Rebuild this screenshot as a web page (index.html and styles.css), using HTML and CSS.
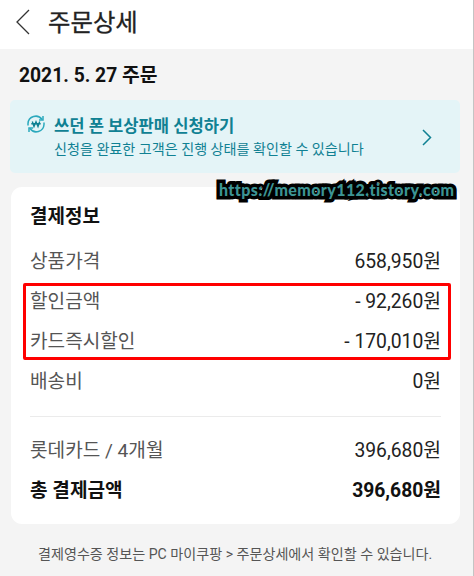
FILE: index.html
```html
<!DOCTYPE html>
<html lang="ko">
  <head>
    <meta charset="UTF-8" />
    <meta name="viewport" content="width=device-width, initial-scale=1.0" />
    <title>주문상세</title>
    <link rel="stylesheet" href="styles.css">
  </head>
  <body>
    <header class="header">
      <svg class="back" width="14" height="26" viewBox="0 0 14 26">
        <path d="M13 1 L1 13 L13 25" />
      </svg>
      <h1>주문상세</h1>
    </header>

    <main class="content">
      <h2 class="order-date">2021. 5. 27 주문</h2>

      <a class="promo">
        <svg class="promo-icon" width="18" height="18" viewBox="0 0 18 18">
          <path d="M1 10.5 V8.5 A7.7 7.7 0 0 1 15 4.5" />
          <path d="M17 7.5 V9.5 A7.7 7.7 0 0 1 3 13.5" />
          <path d="M16 1 V5 H12" />
          <path d="M2 17 V13 H6" />
          <path class="won" d="M5.3 6.5 L7 11.5 L9 6.8 L11 11.5 L12.7 6.5 M4.3 8.8 H13.7" />
        </svg>
        <div class="promo-text">
          <strong>쓰던 폰 보상판매 신청하기</strong>
          <span>신청을 완료한 고객은 진행 상태를 확인할 수 있습니다</span>
        </div>
        <svg class="promo-arrow" width="10" height="17" viewBox="0 0 10 17">
          <path d="M1 1 L8.5 8.5 L1 16" />
        </svg>
      </a>

      <section class="card">
        <div class="watermark">https://memory112.tistory.com</div>
        <h3>결제정보</h3>
        <dl class="rows">
          <div class="row"><dt>상품가격</dt><dd>658,950원</dd></div>
          <div class="highlight">
            <div class="row"><dt>할인금액</dt><dd>- 92,260원</dd></div>
            <div class="row"><dt>카드즉시할인</dt><dd>- 170,010원</dd></div>
          </div>
          <div class="row"><dt>배송비</dt><dd>0원</dd></div>
        </dl>
        <dl class="rows total">
          <div class="row"><dt>롯데카드 / 4개월</dt><dd>396,680원</dd></div>
          <div class="row sum"><dt>총 결제금액</dt><dd>396,680원</dd></div>
        </dl>
      </section>

      <p class="notice">결제영수증 정보는 PC 마이쿠팡 &gt; 주문상세에서 확인할 수 있습니다.</p>
    </main>
  </body>
</html>
```
FILE: styles.css
```css
* {
  margin: 0;
  padding: 0;
  box-sizing: border-box;
}

body {
  width: 474px;
  height: 576px;
  overflow: hidden;
  font-family: Roboto, "Noto Sans CJK KR", sans-serif;
  background: #f4f4f4;
  color: #222;
  border-right: 1px solid #c4c4c4;
  white-space: nowrap;
}

svg {
  fill: none;
  flex-shrink: 0;
}

.header {
  display: flex;
  align-items: center;
  height: 49px;
  padding: 0 16px 6px;
  background: #fff;
}

.back {
  stroke: #333;
  stroke-width: 1.3;
}

.header h1 {
  margin: 2px 0 0 18px;
  font-size: 24.4px;
  font-weight: 400;
  line-height: 30px;
  -webkit-text-stroke: 0.3px #222;
}

.content {
  padding: 0 13px 0 10px;
}

.order-date {
  height: 51px;
  padding-left: 9px;
  font-size: 19.3px;
  font-weight: 700;
  line-height: 53px;
  color: #111;
}

.promo {
  display: flex;
  height: 73px;
  padding: 14px 28px 0 17px;
  background: #e4f4f7;
  border-radius: 5px;
  color: #108193;
}

.promo-icon {
  margin-top: 1px;
  stroke: #2ba9bd;
  stroke-width: 1.5;
}

.promo-icon .won {
  stroke: #108193;
  stroke-width: 1.4;
}

.promo-text {
  flex: 1;
  margin-left: 9px;
}

.promo-text strong,
.promo-text span {
  display: block;
}

.promo-text strong {
  font-size: 16.6px;
  line-height: 25px;
}

.promo-text span {
  font-size: 14.1px;
  line-height: 21px;
}

.promo-arrow {
  margin-top: 15px;
  stroke: #108193;
  stroke-width: 1.5;
}

.card {
  position: relative;
  height: 337px;
  margin: 14px 0 0 1px;
  padding: 15px 19px 0;
  background: #fff;
  border-radius: 11px;
}

.watermark {
  position: absolute;
  top: -10px;
  left: 208px;
  font-family: Lato, sans-serif;
  font-size: 16px;
  font-weight: 900;
  line-height: 25px;
  letter-spacing: 0.4px;
  font-variant-ligatures: none;
  color: #3c9494;
  -webkit-text-stroke: 7px #000;
  paint-order: stroke fill;
  stroke-linejoin: round;
}

.card h3 {
  height: 38px;
  font-size: 19px;
  font-weight: 700;
  line-height: 30px;
  color: #111;
}

.row {
  display: flex;
  align-items: center;
  justify-content: space-between;
  height: 40px;
  font-size: 19.1px;
}

.row dt {
  color: #555;
}

.row dd {
  font-size: 19.3px;
}

.highlight {
  margin: 0 -10px 0 -7px;
  padding: 0 10px 0 7px;
  position: relative;
}

.highlight::after {
  content: "";
  position: absolute;
  inset: 3px 0 0 0;
  border: 3px solid #f00;
  border-radius: 2px;
}

.total {
  margin-top: 16px;
  padding-top: 12px;
  border-top: 1px solid #ebebeb;
}

.sum,
.sum dt {
  font-weight: 700;
  color: #111;
}

.notice {
  margin-top: 19px;
  padding-left: 28px;
  font-size: 14.1px;
  line-height: 22px;
  color: #555;
}
```
